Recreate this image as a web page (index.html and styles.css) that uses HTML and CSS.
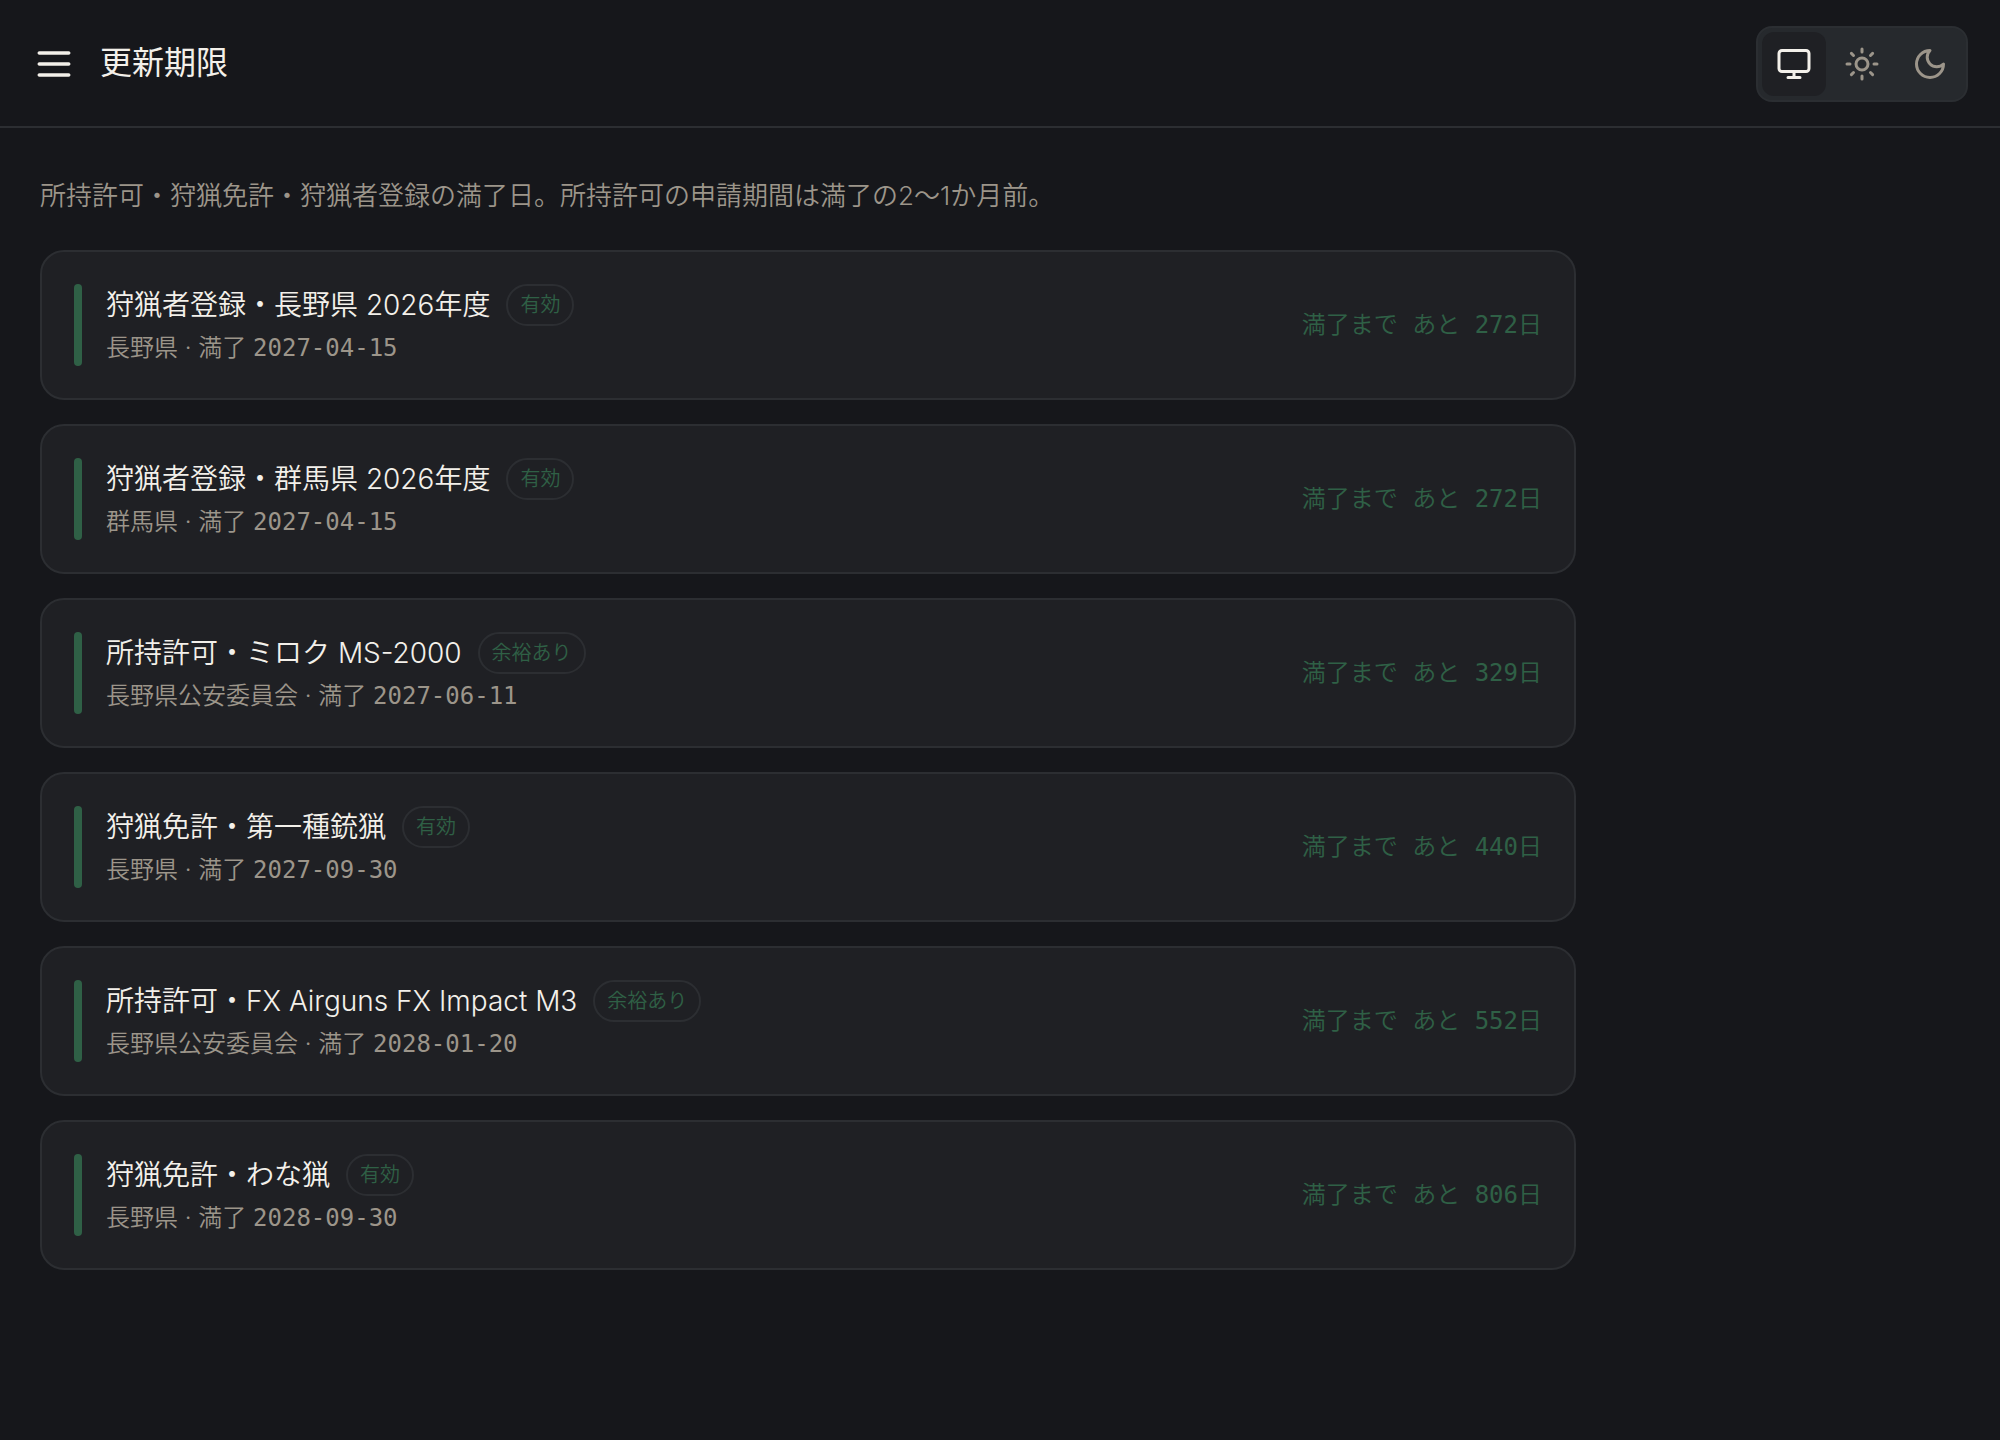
FILE: index.html
```html
<!DOCTYPE html>
<html lang="ja">
<head>
    <meta charset="UTF-8">
    <meta name="viewport" content="width=device-width, initial-scale=1.0">
    <title>更新期限</title>
    <link rel="stylesheet" href="styles.css">
</head>
<body>
    <header class="header">
        <button type="button" class="menu-button" aria-label="メニュー">
            <svg class="icon" viewBox="0 0 24 24"><path d="M4 6h16M4 12h16M4 18h16"/></svg>
        </button>
        <h1>更新期限</h1>
        <div class="theme-toggle" role="group" aria-label="テーマ">
            <button type="button" class="theme-button active" aria-label="システム" aria-pressed="true">
                <svg class="icon" viewBox="0 0 24 24"><rect x="2" y="3" width="20" height="14" rx="2"/><path d="M8 21h8M12 17v4"/></svg>
            </button>
            <button type="button" class="theme-button" aria-label="ライト" aria-pressed="false">
                <svg class="icon" viewBox="0 0 24 24"><circle cx="12" cy="12" r="4"/><path d="M12 2v2M12 20v2M4.93 4.93l1.41 1.41M17.66 17.66l1.41 1.41M2 12h2M20 12h2M6.34 17.66l-1.41 1.41M19.07 4.93l-1.41 1.41"/></svg>
            </button>
            <button type="button" class="theme-button" aria-label="ダーク" aria-pressed="false">
                <svg class="icon" viewBox="0 0 24 24"><path d="M12 3a6 6 0 0 0 9 9 9 9 0 1 1-9-9Z"/></svg>
            </button>
        </div>
    </header>

    <main class="content">
        <p class="intro">所持許可・狩猟免許・狩猟者登録の満了日。所持許可の申請期間は満了の2〜1か月前。</p>

        <ul class="deadline-list">
            <li class="card">
                <span class="bar"></span>
                <div class="info">
                    <div class="title-row">
                        <h2>狩猟者登録・長野県 2026年度</h2>
                        <span class="badge">有効</span>
                    </div>
                    <p class="meta">長野県 · 満了 <time class="date">2027-04-15</time></p>
                </div>
                <p class="remaining">満了まで あと 272日</p>
            </li>
            <li class="card">
                <span class="bar"></span>
                <div class="info">
                    <div class="title-row">
                        <h2>狩猟者登録・群馬県 2026年度</h2>
                        <span class="badge">有効</span>
                    </div>
                    <p class="meta">群馬県 · 満了 <time class="date">2027-04-15</time></p>
                </div>
                <p class="remaining">満了まで あと 272日</p>
            </li>
            <li class="card">
                <span class="bar"></span>
                <div class="info">
                    <div class="title-row">
                        <h2>所持許可・ミロク MS-2000</h2>
                        <span class="badge">余裕あり</span>
                    </div>
                    <p class="meta">長野県公安委員会 · 満了 <time class="date">2027-06-11</time></p>
                </div>
                <p class="remaining">満了まで あと 329日</p>
            </li>
            <li class="card">
                <span class="bar"></span>
                <div class="info">
                    <div class="title-row">
                        <h2>狩猟免許・第一種銃猟</h2>
                        <span class="badge">有効</span>
                    </div>
                    <p class="meta">長野県 · 満了 <time class="date">2027-09-30</time></p>
                </div>
                <p class="remaining">満了まで あと 440日</p>
            </li>
            <li class="card">
                <span class="bar"></span>
                <div class="info">
                    <div class="title-row">
                        <h2>所持許可・FX Airguns FX Impact M3</h2>
                        <span class="badge">余裕あり</span>
                    </div>
                    <p class="meta">長野県公安委員会 · 満了 <time class="date">2028-01-20</time></p>
                </div>
                <p class="remaining">満了まで あと 552日</p>
            </li>
            <li class="card">
                <span class="bar"></span>
                <div class="info">
                    <div class="title-row">
                        <h2>狩猟免許・わな猟</h2>
                        <span class="badge">有効</span>
                    </div>
                    <p class="meta">長野県 · 満了 <time class="date">2028-09-30</time></p>
                </div>
                <p class="remaining">満了まで あと 806日</p>
            </li>
        </ul>
    </main>
</body>
</html>
```

FILE: styles.css
```css
* {
    box-sizing: border-box;
}
body {
    margin: 0;
    min-height: 100vh;
    background-color: #16171b;
    color: #f3f0ea;
    font-family: Inter, 'Noto Sans CJK JP', sans-serif;
    font-size: 28px;
    font-weight: 350;
    line-height: 42px;
}
h1, h2, p, ul {
    margin: 0;
    padding: 0;
}
button {
    display: flex;
    align-items: center;
    justify-content: center;
    padding: 0;
    border: none;
    background: none;
    color: inherit;
    cursor: pointer;
}
.icon {
    width: 36px;
    height: 36px;
    fill: none;
    stroke: currentColor;
    stroke-width: 2;
    stroke-linecap: round;
    stroke-linejoin: round;
}

/* Header */
.header {
    display: flex;
    align-items: center;
    gap: 24px;
    padding: 26px 32px 24px;
    border-bottom: 2px solid #2c2e32;
}
.header h1 {
    padding-bottom: 2px;
    font-size: 32px;
    font-weight: 400;
    line-height: 48px;
}
.menu-button .icon {
    width: 44px;
    height: 44px;
}
.theme-toggle {
    display: flex;
    gap: 4px;
    margin-left: auto;
    padding: 4px;
    border: 2px solid #2b2e32;
    border-radius: 16px;
    background-color: #26292d;
}
.theme-button {
    width: 64px;
    height: 64px;
    border-radius: 12px;
    color: #9c958a;
}
.theme-button.active {
    background-color: #1f2024;
    color: #f3f0ea;
}

/* Deadlines */
.content {
    padding: 48px 40px;
}
.intro {
    margin-bottom: 34px;
    color: #9c958a;
    font-size: 26px;
    line-height: 40px;
}
.deadline-list {
    display: flex;
    flex-direction: column;
    gap: 24px;
    max-width: 1536px;
    list-style: none;
}
.card {
    display: flex;
    align-items: center;
    gap: 24px;
    padding: 32px;
    border: 2px solid #2c2e32;
    border-radius: 24px;
    background-color: #1f2024;
}
.bar {
    align-self: stretch;
    width: 8px;
    border-radius: 4px;
    background-color: #2f6046;
}
.info {
    flex: 1;
}
.title-row {
    display: flex;
    align-items: center;
    gap: 16px;
    margin-bottom: 4px;
}
.title-row h2 {
    font-size: 28px;
    font-weight: 350;
}
.badge {
    padding: 0 12px;
    border: 2px solid #2c2e32;
    border-radius: 21px;
    color: #2f6046;
    font-size: 20px;
    line-height: 38px;
}
.meta {
    color: #9c958a;
    font-size: 24px;
    line-height: 36px;
}
.date {
    font-family: 'DejaVu Sans Mono', monospace;
    line-height: 24px;
}
.remaining {
    color: #2f6046;
    font-family: 'DejaVu Sans Mono', 'Noto Sans CJK JP', monospace;
    font-size: 24px;
    line-height: 36px;
}
```
